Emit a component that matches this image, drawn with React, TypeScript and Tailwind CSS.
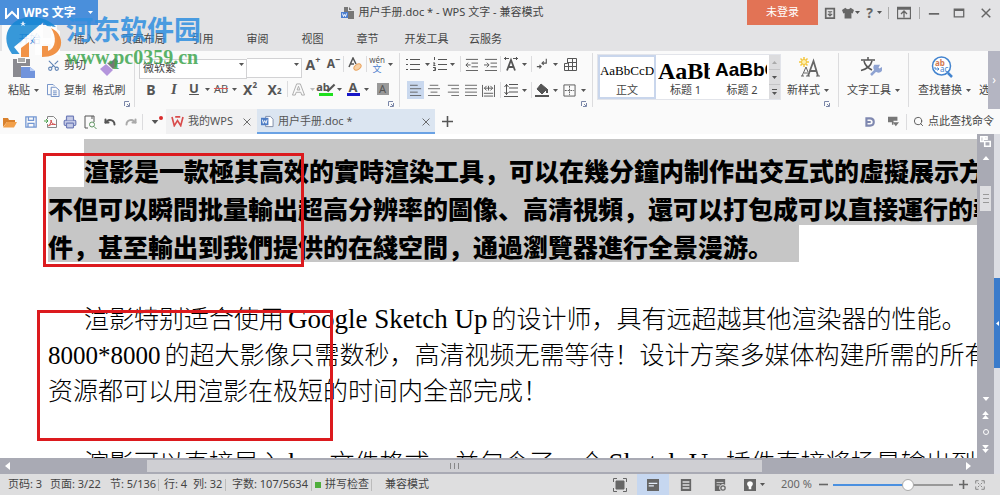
import type { ReactNode } from 'react';
import clsx from 'clsx';
import { Printer, Redo, Scissors, Search, Undo } from 'lucide-react';
import { twMerge } from 'tailwind-merge';

interface BoxProps {
  className?: string;
  children?: ReactNode;
}

interface ToolProps extends BoxProps {
  label: string;
}

const Caret = ({ className }: { className?: string }) => (
  <svg
    viewBox="0 0 5 3"
    className={twMerge('w-[5px] h-[3px] shrink-0 fill-[#555]', className)}
  >
    <path d="M0 0h5L2.5 3z" />
  </svg>
);

const Icon = ({ className = 'size-[14px]', children }: BoxProps) => (
  <svg
    viewBox="0 0 14 14"
    fill="none"
    stroke="currentColor"
    className={clsx('shrink-0', className)}
  >
    {children}
  </svg>
);

const Tool = ({ className, label, children }: ToolProps) => (
  <button
    type="button"
    aria-label={label}
    className={clsx(
      'flex shrink-0 items-center justify-center',
      className,
    )}
  >
    {children}
  </button>
);

const More = ({ className = 'w-[7px]' }: { className?: string }) => (
  <Tool label="更多" className={clsx('h-[18px]', className)}>
    <Caret />
  </Tool>
);

const Split = ({ className }: { className?: string }) => (
  <span className={twMerge('w-px h-4 shrink-0 bg-[#dcdcde]', className)} />
);

const Launcher = ({ className }: { className?: string }) => (
  <button
    type="button"
    aria-label="对话框"
    className={clsx('absolute top-[50px]', className)}
  >
    <svg viewBox="0 0 6 6" className="size-[6px]" fill="none" stroke="#7a86a8">
      <path d="M.5 5V.5H5M5.5 2v3.5H2M3 3l2 2" />
    </svg>
  </button>
);

const WpsMark = ({ className }: { className?: string }) => (
  <svg viewBox="0 0 14 12" fill="none" stroke="currentColor" className={className}>
    <path d="M1 1l2.5 9.5L7 5l3.5 5.5L13 1M4.5 1H10" strokeWidth="1.8" />
  </svg>
);

const TitleMark = () => (
  <svg viewBox="0 0 14 12" fill="none" stroke="#fff" className="h-3 w-[14px]">
    <path d="M1 1v10l6-6 6 6V1" strokeWidth="2" />
  </svg>
);

const DocMark = ({ className }: { className?: string }) => (
  <svg viewBox="0 0 14 14" className={className}>
    <path d="M5 1.5h5l3 3v8H5z" fill="#fff" stroke="#7d8aa5" />
    <path d="M0 3h8v8H0z" fill="#4d7cc4" />
    <path d="M1.5 5l1 4L4 6l1.5 3 1-4" fill="none" stroke="#fff" />
  </svg>
);

const TitleBar = () => (
  <header className="flex h-[25px] items-start bg-[#e3e3e5]">
    <button
      type="button"
      className="flex h-[25px] w-[98px] shrink-0 items-center bg-[#4a8fdb] pl-[5px] text-white"
    >
      <TitleMark />
      <span className="ml-1 text-[12px] font-bold">WPS 文字</span>
      <Caret className="ml-3 fill-white" />
    </button>
    <div className="flex h-[25px] flex-1 items-center justify-center pl-[39px]">
      <svg viewBox="0 0 14 14" className="size-[14px]">
        <path d="M3 1h4v4h4v8H7V6H3z" fill="#777" />
        <path d="M8 1l3 3H8zM8 5h5v8H8z" fill="#777" />
        <path d="M0 6h7v6H0z" fill="#4d7fcf" />
        <path d="M1.5 7.500l1 3 1-2 1 2 1-3" fill="none" stroke="#fff" />
      </svg>
      <h1 className="ml-1 text-[11px] whitespace-pre">
        用户手册.doc * - WPS 文字 - 兼容模式
      </h1>
    </div>
    <button
      type="button"
      className="h-[25px] w-[71px] shrink-0 bg-[#e27355] text-[11px] text-white"
    >
      未登录
    </button>
    <div className="flex h-[25px] w-[182px] shrink-0 items-center text-[#666]">
      <Tool label="消息" className="w-[23px]">
        <Icon className="size-3">
          <path d="M2 2h10v11H2zM1 2h12" strokeWidth="2" />
          <path d="M4.500 5.500h5M7 5v5M4.500 8L7 10.500 9.500 8" strokeWidth="1.300" />
        </Icon>
      </Tool>
      <Tool label="皮肤" className="w-5 gap-px">
        <Icon className="size-3">
          <path
            d="M4 1C5 3 9 3 10 1l4 2.500-1.500 4L11 7v6.500H3V7l-1.500.5L0 3.500z"
            fill="currentColor"
            stroke="none"
          />
        </Icon>
        <Caret />
      </Tool>
      <Tool label="帮助" className="ml-[3px] w-5 gap-1">
        <span className="text-[14px] font-bold">?</span>
        <Caret />
      </Tool>
      <Split className="ml-1 h-3 bg-[#aaa]" />
      <Tool label="收起功能区" className="w-[30px]">
        <Icon className="size-[14px]">
          <path d="M.5 1.500h13v11H.5zM1 3h12M7 11.500V5.500M4 8l3-3 3 3" strokeWidth="1.300" />
        </Icon>
      </Tool>
      <Split className="h-3 bg-[#aaa]" />
      <Tool label="最小化" className="w-[28px]">
        <Icon className="size-3">
          <path d="M1 8h12" strokeWidth="2" />
        </Icon>
      </Tool>
      <Tool label="最大化" className="w-[22px]">
        <Icon className="size-3">
          <path d="M1.500 2.500h11v9h-11zM1.500 4h11" strokeWidth="1.500" />
        </Icon>
      </Tool>
      <Tool label="关闭" className="w-[31px]">
        <Icon className="size-[10px]">
          <path d="M1 1l12 12M13 1L1 13" strokeWidth="2" />
        </Icon>
      </Tool>
    </div>
  </header>
);

const menus = [
  '开始',
  '插入',
  '页面布局',
  '引用',
  '审阅',
  '视图',
  '章节',
  '开发工具',
  '云服务',
];

const MenuBar = () => (
  <nav className="flex h-[26px] bg-[#e3e3e5] pl-[2px] text-[11px]">
    {menus.map((item, index) => (
      <button
        key={item}
        type="button"
        className={clsx(
          'h-[26px] pt-[3px]',
          item.length > 3 ? 'w-[63px]' : 'w-[55px]',
          index === 0 && 'bg-[#fafafa] text-[#4a8fdb]',
        )}
      >
        {item}
      </button>
    ))}
  </nav>
);

const ClipboardGroup = () => (
  <div className="relative flex w-[134px] shrink-0 pl-2 text-[11px]">
    <button type="button" className="flex w-[31px] flex-col items-start">
      <svg viewBox="0 0 22 22" className="mt-[6px] ml-[5px] h-[22px] w-[22px]">
        <path d="M0 2h4v4h9V2h4v7H8v11H0z" fill="#8a8a90" />
        <path d="M5 1h7v4H5z" fill="#aaa" />
        <path d="M8 10h9l5 4v7H8z" fill="#7194dc" />
        <path d="M17 10v4h5" fill="#b9cdf5" />
      </svg>
      <span className="mt-[3px] flex items-center gap-1 whitespace-nowrap">
        粘贴
        <Caret />
      </span>
    </button>
    <div className="ml-2 flex w-10 flex-col gap-[7px] pt-[5px]">
      <button type="button" className="flex h-[18px] items-center gap-1">
        <Scissors className="size-[13px] -rotate-90 text-[#5f83b5]" />
        剪切
      </button>
      <button type="button" className="flex h-[18px] items-center gap-1">
        <Icon className="size-[13px] text-[#6889c4]">
          <path d="M4 11.500H.5V.5h6L8 2M4.500 3.500h5l3.500 3v7H4.500zM6.500 7.500h4M6.500 9.500h4M6.500 11.500h4" />
        </Icon>
        复制
      </button>
    </div>
    <button
      type="button"
      className="ml-[5px] flex w-[34px] flex-col items-center whitespace-nowrap"
    >
      <svg viewBox="0 0 20 20" className="mt-[6px] h-5 w-5">
        <path d="M12 5l4-4 3 3-2 6-3 2-6-6z" fill="#777" />
        <path d="M7 7l7 6-6 6-7-7z" fill="#b495dc" />
      </svg>
      <span className="mt-[5px]">格式刷</span>
    </button>
    <Launcher className="right-1" />
  </div>
);

const FontGroup = () => (
  <div className="relative w-[260px] shrink-0 pt-[3px] text-[#555]">
    <div className="flex h-5 items-center">
      <div className="relative h-5 w-[108px]">
        <select
          aria-label="字体"
          className="size-full appearance-none border border-[#d2d2d4] bg-white pb-[3px] pl-[3px] text-[11px] leading-4 text-[#444]"
        >
          <option>微软繁</option>
        </select>
        <Caret className="pointer-events-none absolute top-[9px] right-[3px]" />
      </div>
      <div className="relative h-5 w-[55px]">
        <select
          aria-label="字号"
          className="size-full appearance-none border border-l-0 border-[#d2d2d4] bg-white text-[11px]"
        >
          <option value="" />
        </select>
        <Caret className="pointer-events-none absolute top-[9px] right-[3px]" />
      </div>
      <Tool label="增大字号" className="w-[22px]">
        <span className="text-[14px] font-bold">A</span>
        <sup className="text-[9px] font-bold">+</sup>
      </Tool>
      <Tool label="减小字号" className="w-[19px]">
        <span className="text-[12px] font-bold">A</span>
        <sup className="text-[9px] font-bold">−</sup>
      </Tool>
      <Split />
      <Tool label="清除格式" className="w-[22px]">
        <Icon>
          <path d="M1 10L5 1l3 6M3 7h3" strokeWidth="1.500" />
          <ellipse cx="9.500" cy="10" rx="4" ry="2.500" fill="#f9d2a5" stroke="#e9a35e" transform="rotate(-35 9.500 10)" />
        </Icon>
      </Tool>
      <Split />
      <Tool label="拼音指南" className="w-5 flex-col">
        <span className="text-[8px] leading-[8px]">wén</span>
        <span className="text-[9px] leading-[9px] text-[#4d7fcf]">文</span>
      </Tool>
      <More />
    </div>
    <div className="mt-[6px] flex h-[18px] items-center">
      <Tool label="加粗" className="w-6 text-[14px] font-bold">
        B
      </Tool>
      <Tool label="倾斜" className="w-[22px] font-['Liberation_Serif',serif] text-[15px] font-bold italic">
        I
      </Tool>
      <Tool label="下划线" className="w-[18px] text-[13px] font-bold underline">
        U
      </Tool>
      <More className="w-[9px]" />
      <Tool label="删除线" className="w-[18px] text-[11px] line-through decoration-[#d65a5a]">
        AB
      </Tool>
      <More className="w-2" />
      <Tool label="上标" className="w-6">
        <span className="text-[14px] font-bold">X</span>
        <sup className="text-[8px] font-bold">2</sup>
      </Tool>
      <Tool label="下标" className="w-[25px]">
        <span className="text-[14px] font-bold">X</span>
        <sub className="text-[8px] font-bold">2</sub>
      </Tool>
      <Split />
      <Tool label="文字效果" className="w-5">
        <Icon className="size-[13px] text-[#aaa]">
          <path d="M.5 13L5 1h4l4.500 12h-3l-1-3h-5l-1 3zM5.500 7.500h3L7 3.500z" />
        </Icon>
      </Tool>
      <Tool label="更多" className="w-2">
        <Caret className="fill-[#bbb]" />
      </Tool>
      <Tool label="突出显示" className="w-5 flex-col">
        <span className="flex h-[11px] items-center text-[11px] font-bold">
          ab
          <Icon className="-ml-1 size-[10px]">
            <path d="M2 12L12 2" strokeWidth="3" />
          </Icon>
        </span>
        <span className="h-[3px] w-[14px] bg-[#1ee01e]" />
      </Tool>
      <More />
      <Tool label="字体颜色" className="w-5 flex-col">
        <span className="h-[11px] text-[13px] leading-[11px] font-bold">A</span>
        <span className="h-[3px] w-[13px] bg-[#1616c8]" />
      </Tool>
      <More />
      <Tool label="字符底纹" className="w-[25px]">
        <span className="size-3 bg-[#999] text-center text-[11px] leading-3">
          A
        </span>
      </Tool>
    </div>
    <Launcher className="right-[5px]" />
  </div>
);

const ParagraphGroup = () => (
  <div className="relative w-[192px] shrink-0 pt-1 text-[#555]">
    <div className="flex h-[18px] items-center pl-[2px]">
      <Tool label="项目符号" className="w-[22px]">
        <Icon>
          <path d="M4 2.500h10M4 7.500h10M4 12.500h10M0 2.500h2M0 7.500h2M0 12.500h2" />
        </Icon>
      </Tool>
      <More className="w-[6px]" />
      <Tool label="编号" className="w-[19px]">
        <Icon>
          <path d="M5 2.500h9M5 7.500h9M5 12.500h9M1.500 0v3M0 6h2L.5 8.500H2.500M0 10.500h2.500v3H0M1 12h1" />
        </Icon>
      </Tool>
      <More />
      <Split className="ml-1" />
      <Tool label="减少缩进" className="w-5">
        <Icon className="size-[13px]">
          <path d="M1 1.500h13M7 5.500h7M7 9.500h7M1 13.500h13M6 7.500H1M3.500 5L1 7.500 3.500 10" />
        </Icon>
      </Tool>
      <Tool label="增加缩进" className="w-[19px]">
        <Icon className="size-[13px]">
          <path d="M1 1.500h13M7 5.500h7M7 9.500h7M1 13.500h13M0 7.500h5M3 5l2.500 2.500L3 10" />
        </Icon>
      </Tool>
      <Split />
      <Tool label="中文版式" className="w-5">
        <Icon>
          <path d="M3 13.500L7 3l4 10.500M4.500 10h5" strokeWidth="1.800" />
          <path d="M5 1.500H0M2 0L.5 1.500 2 3M9 1.500h5M12 0l1.500 1.500L12 3" />
        </Icon>
      </Tool>
      <More />
      <Split className="ml-[3px]" />
      <Tool label="换行" className="w-5">
        <Icon className="size-3">
          <path d="M12 1v5H7M9 4L7 6l2 2M1 10h5M4 8l2 2-2 2" strokeWidth="1.300" />
        </Icon>
      </Tool>
      <More />
      <Tool label="插入表格" className="w-[21px]">
        <Icon>
          <path d="M4.500 1.500h9v12h-12v-7h3zM4.500 5.500h9M1.500 9.500h12M5.500 6v8M9.500 1v13" />
        </Icon>
      </Tool>
    </div>
    <div className="mt-2 flex h-[18px] items-center pl-[7px]">
      <Tool label="左对齐" className="h-[18px] w-[17px] bg-[#c9d8ee]">
        <Icon className="size-3">
          <path d="M0 1.500h9M0 5.500h13M0 9.500h9M0 13.500h13" />
        </Icon>
      </Tool>
      <Tool label="居中" className="w-[19px]">
        <Icon className="size-3">
          <path d="M2 1.500h10M0 5.500h14M3 9.500h8M0 13.500h14" />
        </Icon>
      </Tool>
      <Tool label="右对齐" className="w-[19px]">
        <Icon className="size-3">
          <path d="M1 1.500h13M5 5.500h9M1 9.500h13M5 13.500h9" />
        </Icon>
      </Tool>
      <Tool label="两端对齐" className="w-[17px]">
        <Icon className="size-3">
          <path d="M0 1.500h14M0 5.500h14M0 9.500h14M0 13.500h14" />
        </Icon>
      </Tool>
      <Tool label="分散对齐" className="w-[18px]">
        <Icon className="size-[13px]">
          <path d="M.5 1v13M13.500 1v13M2 10h10M2 13h10M2.500 4.500h9M5 2L2.500 4.500 5 7M9 2l2.500 2.500L9 7M7 2v5" />
        </Icon>
      </Tool>
      <Split className="ml-[3px]" />
      <Tool label="行距" className="w-5">
        <Icon>
          <path d="M5 1.500h9M5 5h9M5 9h9M0 13.500h14M2.500 1v11M.5 4l2-2.500 2 2.500M.5 9l2 2.500 2-2.500" />
        </Icon>
      </Tool>
      <More />
      <Split className="ml-[3px]" />
      <Tool label="底纹颜色" className="w-5">
        <Icon>
          <path d="M6 1l6 5-5 5-5-5z" fill="currentColor" />
          <path d="M12 6v4M0 13h14" strokeWidth="2" />
        </Icon>
      </Tool>
      <More />
      <Tool label="边框" className="w-[21px]">
        <Icon className="size-[13px]">
          <path d="M1 1h12v12H1z" />
          <path d="M7 2v10M2 7h10" strokeDasharray="2 1" />
        </Icon>
      </Tool>
      <More className="w-[6px]" />
    </div>
    <Launcher className="right-[5px]" />
  </div>
);

const StyleGallery = () => (
  <div className="mt-[3px] ml-1 flex h-[46px] w-[184px] shrink-0 border border-[#e2e4ea] bg-white text-[11px]">
    <button
      type="button"
      className="flex w-[58px] flex-col items-center overflow-hidden border-2 border-[#c9d6ec]"
    >
      <span className="mt-[3px] h-[21px] font-['Liberation_Serif',serif] text-[13px] leading-[21px] text-black">
        AaBbCcD
      </span>
      <span className="leading-[18px]">正文</span>
    </button>
    <button type="button" className="w-[57px] overflow-hidden pt-[2px] pl-[2px]">
      <span className="block h-[24px] w-[52px] overflow-hidden text-left font-['Liberation_Serif',serif] text-[24px] leading-[28px] font-bold text-black">
        AaBb
      </span>
      <span className="block leading-[18px]">标题 1</span>
    </button>
    <button type="button" className="w-[56px] overflow-hidden pt-[2px] pl-[2px]">
      <span className="block h-[24px] w-[52px] overflow-hidden text-left font-['Liberation_Sans',sans-serif] text-[19px] leading-[26px] font-bold text-black">
        AaBbC
      </span>
      <span className="block leading-[18px]">标题 2</span>
    </button>
    <div className="flex flex-1 flex-col divide-y divide-[#c4c4c6] bg-[#dcdcde]">
      <button type="button" aria-label="向上" className="flex flex-1 items-center justify-center">
        <Caret className="rotate-180 fill-[#aaa]" />
      </button>
      <button type="button" aria-label="向下" className="flex flex-1 items-center justify-center">
        <Caret />
      </button>
      <button
        type="button"
        aria-label="展开"
        className="flex flex-1 flex-col items-center justify-center gap-[2px]"
      >
        <span className="h-px w-[5px] bg-[#555]" />
        <Caret />
      </button>
    </div>
  </div>
);

const BigTool = ({
  className,
  label,
  children,
}: ToolProps) => (
  <button
    type="button"
    className={clsx('flex shrink-0 flex-col items-start text-[11px]', className)}
  >
    <span className="mt-[5px] flex h-[23px] w-11 justify-center">{children}</span>
    <span className="mt-[3px] flex items-center gap-1 whitespace-nowrap">
      {label}
      <Caret />
    </span>
  </button>
);

const Ribbon = () => (
  <section className="flex h-[58px] overflow-hidden bg-[#fafafa]">
    <ClipboardGroup />
    <Split className="mr-1 h-[54px] self-center" />
    <FontGroup />
    <Split className="h-[54px] self-center" />
    <ParagraphGroup />
    <Split className="h-[54px] self-center" />
    <StyleGallery />
    <div className="relative w-[57px] shrink-0 pl-[6px]">
      <BigTool label="新样式" className="w-11">
        <svg viewBox="0 0 22 22" className="size-[22px]">
          <path d="M6 1v10M1 6h10M2.500 2.500l7 7M9.500 2.500l-7 7" stroke="#f3c63e" strokeWidth="1.500" />
          <circle cx="6" cy="6" r="2.500" fill="#fdf0b4" stroke="#f3c63e" />
          <path d="M10 20l5.500-15L20 20M12 15h6" fill="none" stroke="#666" strokeWidth="1.800" />
          <path d="M4 20l4-9 2 5M6 17h4M3 20h3M8 20h4M18 20h4" fill="none" stroke="#666" />
        </svg>
      </BigTool>
      <Launcher className="right-2" />
    </div>
    <Split className="h-[54px] self-center" />
    <BigTool label="文字工具" className="w-[69px] pl-2">
      <svg viewBox="0 0 22 22" className="ml-1 size-[22px]">
        <path d="M1 4h14M8 1v3M4 5c1 5 4 7 8 9M12 5C11 9 7 13 1 14.500" fill="none" stroke="#555" strokeWidth="1.500" />
        <path d="M11 19l5-5M15 10c-1 2 0 4 2 5s4 0 4-2l-2 1-2-2 1-2z" fill="#8fa3d2" stroke="#8fa3d2" strokeWidth="2.500" />
      </svg>
    </BigTool>
    <Split className="h-[54px] self-center" />
    <BigTool label="查找替换" className="w-[62px] pl-[9px]">
      <svg viewBox="0 0 22 22" className="ml-1 size-[22px]">
        <circle cx="10.500" cy="10" r="9" fill="#fff" stroke="#4384cf" strokeWidth="1.500" />
        <path d="M17 17l4 4" stroke="#4384cf" strokeWidth="2.500" />
        <text x="4" y="10" fontSize="8" fontWeight="700" fill="#d37950">
          ab
        </text>
        <text x="9" y="16" fontSize="8" fill="#4384cf">
          ac
        </text>
        <path d="M4 11v2h4M6.500 11.500L8 13l-1.500 1.500" fill="none" stroke="#4384cf" />
      </svg>
    </BigTool>
    <div className="min-w-0 flex-1 overflow-hidden pt-[31px] pl-2 text-[11px] whitespace-nowrap">
      选择
    </div>
    <button
      type="button"
      aria-label="展开功能区"
      className="w-3 shrink-0 bg-[#b4b5c2] text-[12px] text-white"
    >
      ›
    </button>
  </section>
);

const TabBar = () => (
  <div className="flex h-[25px] items-center bg-[#fafafa] text-[11px] text-[#555]">
    <Tool label="打开" className="w-5">
      <Icon>
        <path d="M0 12V3h5l1 2h6v2H4z" fill="#d9812c" stroke="none" />
        <path d="M4 7h10l-3 5.500H0z" fill="#f2a04a" stroke="none" />
      </Icon>
    </Tool>
    <Tool label="保存" className="w-[22px]">
      <Icon className="size-3 text-[#7296d2]">
        <path d="M1 1h12v12H1zM4 1v4h6V1M3.500 13V8.500h7V13" strokeWidth="1.500" />
      </Icon>
    </Tool>
    <Tool label="输出为PDF" className="w-[18px]">
      <Icon>
        <path d="M3.500 4V1.500h6l3 3v8h-9V9" stroke="#888" />
        <path d="M4.500 11c2-2 3-4 2.500-6 0 3 2 4.500 4.500 4.500C8.500 9 6 9.500 4.500 11z" stroke="#d04a4a" />
        <path d="M0 6h3M2 4l2 2-2 2" stroke="#4ba04b" />
      </Icon>
    </Tool>
    <Tool label="打印" className="w-5">
      <Printer className="size-[14px] fill-[#c4cae6] text-[#6f7cb8]" />
    </Tool>
    <Tool label="打印预览" className="w-5">
      <Icon>
        <path d="M5 13H2V1h9v6M9 1v3" />
        <circle cx="9" cy="9.500" r="2.500" stroke="#5e9360" />
        <path d="M11 11.500l2.500 2.500" stroke="#5e9360" />
      </Icon>
    </Tool>
    <Tool label="撤销" className="w-5">
      <Undo strokeWidth={4} className="size-3" />
    </Tool>
    <Tool label="恢复" className="w-[22px]">
      <Redo strokeWidth={4} className="size-3 text-[#aaa]" />
    </Tool>
    <Split />
    <Tool label="自定义" className="w-[23px] gap-0">
      <Caret className="ml-1 h-1 w-2" />
      <span className="mb-[7px] size-[4px] rounded-full bg-[#d92b2b]" />
    </Tool>
    <div className="flex h-full w-[91px] shrink-0 items-center bg-[#f1f1f2] pl-[5px]">
      <WpsMark className="h-[11px] w-[13px] text-[#d94b4b]" />
      <span className="ml-1">我的WPS</span>
      <button type="button" aria-label="关闭标签" className="mr-[6px] ml-auto">
        <Icon className="size-2">
          <path d="M1 1l12 12M13 1L1 13" strokeWidth="1.500" />
        </Icon>
      </button>
    </div>
    <div className="flex h-full w-[178px] shrink-0 items-center border-b-2 border-[#6aa2e4] bg-[#dbe5f1] pt-[2px] pl-1">
      <DocMark className="size-[13px]" />
      <span className="ml-1">用户手册.doc *</span>
      <button type="button" aria-label="关闭标签" className="mr-[5px] ml-auto">
        <Icon className="size-2">
          <path d="M1 1l12 12M13 1L1 13" strokeWidth="1.500" />
        </Icon>
      </button>
    </div>
    <Tool label="新建标签" className="w-6">
      <Icon className="size-[11px]">
        <path d="M7 0v14M0 7h14" strokeWidth="2" />
      </Icon>
    </Tool>
    <div className="ml-auto flex items-center">
      <Tool label="文档助手" className="w-6">
        <Icon className="size-[10px] text-[#7f88b0]">
          <path d="M2 2h5c7 0 7 10 0 10H2zM2 7h6" strokeWidth="3" />
        </Icon>
      </Tool>
      <Tool label="切换窗口" className="w-[22px]">
        <Icon className="size-[11px]">
          <path d="M0 1h12v5h-5v5H5V8H0z" fill="#777" stroke="none" />
          <path d="M6 8h8l-4 5z" fill="#777" stroke="none" />
        </Icon>
      </Tool>
      <Split className="ml-[2px]" />
      <label className="flex items-center gap-1 pl-[6px]">
        <Search className="size-[11px]" />
        <input
          type="text"
          placeholder="点此查找命令"
          className="w-[72px] bg-transparent text-[11px] outline-none placeholder:text-[#444] placeholder:opacity-100"
        />
      </label>
    </div>
  </div>
);

const Latin = ({ children }: BoxProps) => (
  <span className="mx-1 font-['Liberation_Serif',serif] text-[27px] font-normal">
    {children}
  </span>
);

const Page = () => (
  <main className="relative min-w-0 flex-1 overflow-hidden bg-white font-['Noto_Sans_CJK_SC',sans-serif] text-[25px] whitespace-pre text-black">
    <div className="pt-[5px] pl-12 leading-[30px] font-black">
      <p className="ml-9 h-12 bg-[#c6c6c6] pt-4">
        渲影是一款極其高效的實時渲染工具，可以在幾分鐘内制作出交互式的虛擬展示方
      </p>
      <p className="h-[38px] bg-[#c6c6c6] pt-[6px]">
        不但可以瞬間批量輸出超高分辨率的圖像、高清視頻，還可以打包成可以直接運行的執
      </p>
      <p className="h-[37px] w-[751px] bg-[#c6c6c6] pt-[6px]">
        件，甚至輸出到我們提供的在綫空間，通過瀏覽器進行全景漫游。
      </p>
    </div>
    <div className="mt-[37px] pl-12 leading-9 font-light">
      <p className="h-9 pl-9">
        渲影特别适合使用<Latin>Google Sketch Up</Latin>的设计师，具有远超越其他渲染器的性能。
      </p>
      <p className="h-9">
        <span className="mr-1 font-['Liberation_Serif',serif] font-normal">8000*8000</span>
        的超大影像只需数秒，高清视频无需等待！设计方案多媒体构建所需的所有
      </p>
      <p className="h-9">资源都可以用渲影在极短的时间内全部完成！</p>
      <p className="mt-9 h-9 pl-9">
        渲影可以直接导入<Latin>ksx</Latin>文件格式，并包含了一个<Latin>Sketch Up</Latin>
        插件直接将场景输出到
      </p>
    </div>
    <div className="absolute top-[19px] left-[43px] h-[114px] w-[261px] border-[3px] border-[#dc1a1e]" />
    <div className="absolute top-[176px] left-[37px] h-[131px] w-[296px] border-[3px] border-[#dc1a1e]" />
  </main>
);

const VerticalScroll = () => (
  <div className="flex w-[17px] shrink-0 flex-col items-center bg-[#a9aab4] text-white">
    <Icon className="mt-[2px] size-[11px]">
      <path d="M1 1h3v6H1zM6 1h3v3H6zM6 7h7v6H6z" strokeWidth="2" />
    </Icon>
    <Caret className="mt-[9px] h-1 w-2 rotate-180 fill-white" />
    <div className="mt-[26px] flex h-[25px] w-[11px] flex-col items-center justify-center gap-[3px] bg-[#dedee1]">
      <span className="h-px w-[6px] bg-[#999]" />
      <span className="h-px w-[6px] bg-[#999]" />
      <span className="h-px w-[6px] bg-[#999]" />
    </div>
    <div className="mt-auto flex flex-col items-center gap-[10px] pb-[5px]">
      <Caret className="h-1 w-2 fill-white" />
      <span className="flex flex-col">
        <Caret className="h-1 w-[7px] rotate-180 fill-white" />
        <Caret className="h-1 w-[7px] rotate-180 fill-white" />
      </span>
      <span className="size-[6px] rounded-full border border-white" />
      <span className="flex flex-col">
        <Caret className="h-1 w-[7px] fill-white" />
        <Caret className="h-1 w-[7px] fill-white" />
      </span>
    </div>
  </div>
);

const HorizontalScroll = () => (
  <div className="mr-[6px] flex h-4 shrink-0 items-center bg-[#a9aab4]">
    <div className="flex w-[147px] pl-[5px]">
      <svg viewBox="0 0 5 8" className="h-2 w-[5px] fill-white">
        <path d="M5 0v8L0 4z" />
      </svg>
    </div>
    <div className="flex h-3 flex-1 items-center justify-center gap-[3px] bg-[#cfcfd3]">
      <span className="h-[6px] w-px bg-[#888]" />
      <span className="h-[6px] w-px bg-[#888]" />
      <span className="h-[6px] w-px bg-[#888]" />
    </div>
    <div className="flex w-[232px] justify-end pr-[23px]">
      <svg viewBox="0 0 5 8" className="h-2 w-[5px] fill-white">
        <path d="M0 0v8l5-4z" />
      </svg>
    </div>
  </div>
);

const StatusBar = () => (
  <footer className="flex h-[21px] shrink-0 items-center bg-[#dededf] pl-2 text-[11px] whitespace-nowrap text-[#444]">
    <span className="w-[42px]">页码: 3</span>
    <span className="w-[60px]">页面: 3/22</span>
    <span className="w-[48px]">节: 5/136</span>
    <Split className="h-3 bg-[#bbb]" />
    <span className="ml-[5px] w-[29px]">行: 4</span>
    <span className="w-8">列: 32</span>
    <Split className="h-3 bg-[#bbb]" />
    <span className="ml-[6px] w-[79px]">字数: 107/5634</span>
    <Split className="h-3 bg-[#bbb]" />
    <span className="ml-[3px] size-[6px] bg-[#4fae3c]" />
    <span className="ml-1 w-[46px]">拼写检查</span>
    <Split className="h-3 bg-[#bbb]" />
    <span className="ml-[13px]">兼容模式</span>
    <div className="ml-auto flex items-center pr-[10px] text-[#666]">
      <Tool label="全屏显示" className="w-[35px]">
        <Icon>
          <path d="M3 3h8v8H3z" fill="currentColor" />
          <path d="M.5 4V.5H4M10 .5h3.500V4M13.500 10v3.500H10M4 13.500H.5V10" />
        </Icon>
      </Tool>
      <Tool label="页面视图" className="h-[21px] w-[32px] bg-[#c6d7f0]">
        <Icon className="size-3">
          <path d="M0 0h14v14H0z" fill="currentColor" stroke="none" />
          <path d="M2 5h10M2 8h6" stroke="#e4ecf8" strokeWidth="1.500" />
        </Icon>
      </Tool>
      <Tool label="大纲" className="w-[34px]">
        <Icon className="size-3">
          <path d="M1 0h12v14H1z" fill="currentColor" stroke="none" />
          <path d="M3 3.500h8M3 7h8M3 10.500h8" stroke="#dededf" strokeWidth="1.500" />
        </Icon>
      </Tool>
      <Tool label="网页视图" className="w-[33px]">
        <Icon className="size-3">
          <path d="M1 0h12v7a4 4 0 0 0-5 7H1z" fill="currentColor" stroke="none" />
          <path d="M3 4h8M3 7h4" stroke="#dededf" />
          <circle cx="10.500" cy="10.500" r="2.500" strokeWidth="1.500" />
        </Icon>
      </Tool>
      <Tool label="护眼模式" className="w-9 gap-1">
        <Icon className="size-3">
          <path d="M0 0h14v14H0z" fill="currentColor" stroke="none" />
          <path d="M5.500 9C2 6 4 2.500 7 2.500S12 6 8.500 9v3h-3z" fill="#fff" stroke="none" />
        </Icon>
        <Caret />
      </Tool>
      <output className="ml-[9px] w-9">200 %</output>
      <Tool label="缩小" className="w-3">
        <Icon className="size-[9px]">
          <path d="M0 7h14" strokeWidth="2.500" />
        </Icon>
      </Tool>
      <input
        type="range"
        aria-label="显示比例"
        min={0}
        max={100}
        defaultValue={64}
        className="mx-1 h-[14px] w-[120px] appearance-none bg-transparent [&::-webkit-slider-runnable-track]:h-[2px] [&::-webkit-slider-runnable-track]:bg-[linear-gradient(to_right,#4a90e0_62%,#999_62%)] [&::-webkit-slider-thumb]:-mt-[5px] [&::-webkit-slider-thumb]:size-3 [&::-webkit-slider-thumb]:appearance-none [&::-webkit-slider-thumb]:rounded-full [&::-webkit-slider-thumb]:border [&::-webkit-slider-thumb]:border-[#aaa] [&::-webkit-slider-thumb]:bg-white"
      />
      <Tool label="放大" className="w-3">
        <Icon className="size-[9px]">
          <path d="M0 7h14M7 0v14" strokeWidth="2.500" />
        </Icon>
      </Tool>
      <Tool label="适应窗口" className="w-[21px]">
        <Icon className="size-[10px]">
          <path d="M1 5V1h4M9 1h4v4M13 9v4H9M5 13H1V9M4 4l2 2M10 4L8 6M4 10l2-2M10 10L8 8" />
        </Icon>
      </Tool>
    </div>
  </footer>
);

const Watermark = () => (
  <div className="pointer-events-none absolute top-[15px] left-1 flex items-start opacity-85">
    <svg viewBox="0 0 62 46" className="h-[46px] w-[62px]">
      <path d="M8 39C-2 26 2 11 14 5c12-6 29-3 38 7l-9-1-4-4-22 19v13z" fill="#1687d4" />
      <path d="M10 32L39 8v15h8V11l9 5v24h-9V29h-8v11h-8V22L18 33v9z" fill="#fff" />
      <path d="M17 33l8-6v15h-8zM47 13c9 4 12 13 9 20-3 6-9 9-18 9V31h6v5c8-3 9-14 3-23z" fill="#f08229" />
      <path d="M19 6l1 2h2l-2 1 1 2-2-1-2 1 1-2-2-1h2z" fill="#fff" />
    </svg>
    <div className="whitespace-nowrap">
      <p className="text-[27px] leading-[30px] font-bold text-[#2f8fe0]">
        河东软件园
      </p>
      <p className="font-['Liberation_Serif',serif] text-[20px] leading-6 font-bold text-[#3fa650]">
        www.pc0359.cn
      </p>
    </div>
  </div>
);

export default function App() {
  return (
    <div className="relative flex h-screen flex-col overflow-hidden bg-[#dcdde3] font-['Noto_Sans','Noto_Sans_CJK_SC',sans-serif] text-[#444]">
      <TitleBar />
      <MenuBar />
      <Ribbon />
      <TabBar />
      <div className="flex min-h-0 flex-1">
        <Page />
        <VerticalScroll />
        <div className="flex w-[6px] shrink-0 flex-col pt-36">
          <button
            type="button"
            aria-label="展开任务窗格"
            className="flex h-[90px] items-center justify-center bg-[#3a7bcb]"
          >
            <svg viewBox="0 0 3 5" className="h-[5px] w-[3px] fill-white">
              <path d="M3 0v5L0 2.500z" />
            </svg>
          </button>
        </div>
      </div>
      <HorizontalScroll />
      <StatusBar />
      <Watermark />
    </div>
  );
}
